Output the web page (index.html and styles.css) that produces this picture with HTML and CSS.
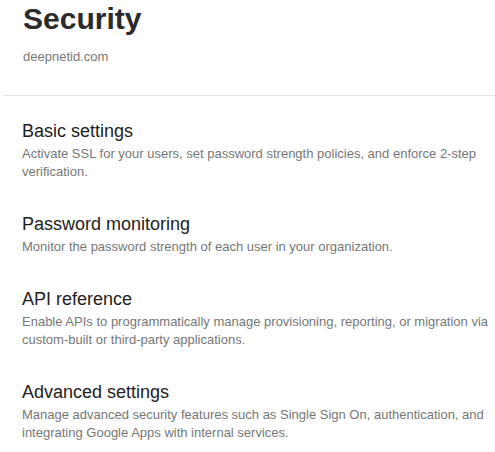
FILE: index.html
```html
<!DOCTYPE html>
<html lang="en">
<head>
<meta charset="utf-8">
<title>Security</title>
<link rel="stylesheet" href="styles.css">
</head>
<body>
<header class="page-header">
  <h1 class="title">Security</h1>
  <div class="domain">deepnetid.com</div>
</header>
<div class="divider"></div>
<main class="sections">
  <section class="item">
    <h2 class="item-title">Basic settings</h2>
    <p class="item-desc">Activate SSL for your users, set password strength policies, and enforce 2-step verification.</p>
  </section>
  <section class="item">
    <h2 class="item-title">Password monitoring</h2>
    <p class="item-desc">Monitor the password strength of each user in your organization.</p>
  </section>
  <section class="item">
    <h2 class="item-title">API reference</h2>
    <p class="item-desc">Enable APIs to programmatically manage provisioning, reporting, or migration via custom-built or third-party applications.</p>
  </section>
  <section class="item">
    <h2 class="item-title">Advanced settings</h2>
    <p class="item-desc">Manage advanced security features such as Single Sign On, authentication, and integrating Google Apps with internal services.</p>
  </section>
</main>
</body>
</html>
```
FILE: styles.css
```css
html, body {
  margin: 0;
  padding: 0;
  background: #fff;
}
body {
  font-family: "Liberation Sans", Arial, sans-serif;
}
.page-header {
  padding: 2px 8px 0 23px;
  display: flex;
  flex-direction: column;
}
.title {
  margin: 0;
  font-size: 30px;
  line-height: 34px;
  font-weight: bold;
  color: #2b2b2b;
}
.domain {
  margin-top: 12px;
  font-size: 13px;
  line-height: 18px;
  color: #777;
}
.divider {
  margin: 29px 0 0 3px;
  height: 1px;
  background: #e5e5e5;
}
.sections {
  padding: 24px 0 0 22px;
  display: flex;
  flex-direction: column;
  gap: 32px;
}
.item-title {
  margin: 0;
  font-size: 18px;
  line-height: 22px;
  font-weight: normal;
  color: #222;
}
.item-desc {
  margin: 3px 0 0;
  font-size: 13px;
  line-height: 18px;
  color: #777;
}
```
